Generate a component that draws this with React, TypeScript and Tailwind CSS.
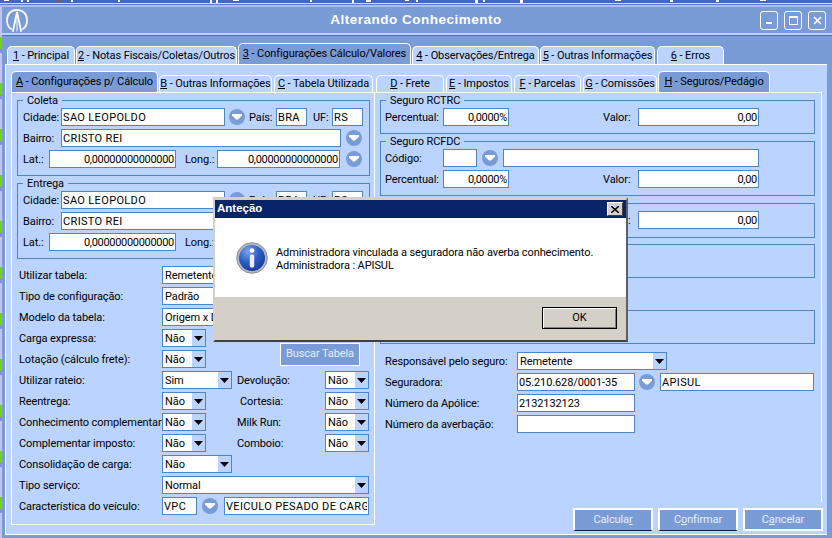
import React from "react";

const Field = ({ w, value = "", right, className = "" }: { w: number; value?: string; right?: boolean; className?: string }) => (
  <input
    readOnly
    value={value}
    style={{ width: w }}
    className={`h-[18px] shrink-0 border border-[#4a86c8] bg-white px-[1px] text-[11px] text-black outline-none ${right ? "text-right tracking-[-0.3px]" : ""} ${className}`}
  />
);

const Pick = ({ w, value, className = "" }: { w: number; value: string; className?: string }) => (
  <div style={{ width: w }} className={`flex h-[18px] shrink-0 items-stretch border border-[#4a86c8] bg-white ${className}`}>
    <span className="flex-1 overflow-hidden whitespace-nowrap pl-[2px] leading-[18px]">{value}</span>
    <span className="flex w-[13px] items-center justify-center bg-[#bad4ff]">
      <svg width="9" height="5" viewBox="0 0 9 5"><path d="M0 0h9L4.500 5z" fill="#000" /></svg>
    </span>
  </div>
);

const Lookup = ({ className = "" }: { className?: string }) => (
  <span className={`flex h-[16px] w-[16px] shrink-0 items-center justify-center rounded-full bg-[#7a9cd6] ${className}`}>
    <svg width="10" height="6" viewBox="0 0 10 6"><path d="M0 0h10v1.500L6 5.500H4L0 1.500z" fill="#fff" /></svg>
  </span>
);

const Label = ({ w, children, className = "" }: { w: number; children: React.ReactNode; className?: string }) => (
  <span style={{ width: w }} className={`shrink-0 whitespace-nowrap leading-[20px] ${className}`}>{children}</span>
);

const Row = ({ children, className = "" }: { children: React.ReactNode; className?: string }) => (
  <div className={`flex h-[18px] items-start ${className}`}>{children}</div>
);

const Group = ({ title, h, children }: { title: string; h: number; children: React.ReactNode }) => (
  <fieldset style={{ height: h }} className="border border-[#4a86c8] px-0">
    <legend className="ml-[5px] h-[14px] px-[4px] text-[11px] leading-[15px]">{title}</legend>
    <div className="flex flex-col gap-[3px] pt-[1px]">{children}</div>
  </fieldset>
);

const Tab = ({ w, mark, text, active, big, className = "" }: { w: number; mark: string; text: string; active?: boolean; big?: boolean; className?: string }) => (
  <div
    style={{ width: w }}
    className={`flex shrink-0 items-center justify-center whitespace-nowrap rounded-t-[5px] border-x border-t border-white pt-[1px] text-[11px] ${
      active ? "bg-[#7a9cd6]" : "bg-[#bad4ff]"
    } ${big ? (active ? "h-[21px]" : "h-[18px]") : active ? "h-[21px]" : "h-[17px]"} ${className}`}
  >
    <span className="underline">{mark}</span>
    <span>&nbsp;- {text}</span>
  </div>
);

const ActionButton = ({ before, mark, after, edge }: { before: string; mark: string; after: string; edge?: boolean }) => (
  <button className={`h-[23px] w-[80px] border-2 border-white bg-[#7a9cd6] text-[11px] leading-[18px] text-[#e6eeff] ${edge ? "border-b border-b-[#10204a]" : ""}`}>
    {before}
    <span className="underline">{mark}</span>
    {after}
  </button>
);

const Logo = () => (
  <svg width="22" height="23" viewBox="0 0 22 23" fill="none" stroke="#fff" strokeLinecap="round" className="ml-[4px] shrink-0">
    <path d="M5 20C2 18 1 14 1 11 1 5 5 1 11 1s10 4 10 10c0 3-1 7-4 9" strokeWidth="1.800" opacity="0.9" />
    <path d="M7 22 11 3l4 19" strokeWidth="1.800" />
    <path d="M11 7v15" strokeWidth="1.200" opacity="0.8" />
  </svg>
);

const InfoIcon = () => (
  <svg width="32" height="32" viewBox="0 0 32 32" className="shrink-0">
    <defs>
      <radialGradient id="infoFill" cx="0.35" cy="0.25" r="0.9">
        <stop offset="0" stopColor="#7ea6ee" />
        <stop offset="0.45" stopColor="#2f5fc8" />
        <stop offset="1" stopColor="#12308c" />
      </radialGradient>
    </defs>
    <circle cx="16" cy="16" r="15.300" fill="#b4b8c0" stroke="#8a8e98" />
    <circle cx="16" cy="16" r="13" fill="url(#infoFill)" />
    <circle cx="16" cy="8.500" r="2.300" fill="#fff" />
    <rect x="13.800" y="12.500" width="4.400" height="13" rx="1.500" fill="#e8edf6" />
  </svg>
);

const Place = ({ title }: { title: string }) => (
  <Group title={title} h={83}>
    <Row className="pl-[5px]">
      <Label w={38}>Cidade:</Label>
      <Field w={164} value="SAO LEOPOLDO" className="tracking-[0.35px]" />
      <Lookup className="ml-[4px] mt-[1px]" />
      <Label w={27} className="ml-[4px]">País:</Label>
      <Field w={31} value="BRA" className="tracking-[0.35px]" />
      <Label w={19} className="ml-[6px]">UF:</Label>
      <Field w={31} value="RS" className="tracking-[0.35px]" />
    </Row>
    <Row className="pl-[5px]">
      <Label w={38}>Bairro:</Label>
      <Field w={280} value="CRISTO REI" className="tracking-[0.35px]" />
      <Lookup className="ml-[5px] mt-[1px]" />
    </Row>
    <Row className="pl-[5px]">
      <Label w={26}>Lat.:</Label>
      <Field w={127} right value="0,00000000000000" />
      <Label w={32} className="ml-[9px]">Long.:</Label>
      <Field w={123} right value="0,00000000000000" />
      <Lookup className="ml-[6px] mt-[1px]" />
    </Row>
  </Group>
);

export default function App() {
  return (
    <div className="relative h-[538px] w-[832px] overflow-hidden bg-[#7a9cd6] text-[11px] tracking-[-0.1px] text-black [font-family:Roboto,'Liberation_Sans',sans-serif]">
      <div className="h-[3px] bg-[#3f68c8]">
        <svg width="832" height="3" fill="#fff">
          <path d="M4 0h5v1H4zM21 0h2v2h-2zM27 0h2v2h-2zM71 0h2v2h-2zM118 0h2v2h-2zM210 0h2v3h-2zM216 0h2v3h-2zM233 0h6v1h-6zM310 0h2v2h-2zM352 0h2v3h-2zM366 0h5v2h-5zM405 0h4v1h-4zM416 0h2v2h-2zM475 0h3v3h-3zM483 0h2v2h-2zM520 0h3v3h-3zM615 0h6v1h-6zM670 0h3v2h-3zM716 0h3v2h-3zM760 0h6v1h-6z" />
          <circle cx="59" cy="0" r="3" fill="#666" />
        </svg>
      </div>
      <div className="h-[1px] bg-[#c8dcfc]" />
      <div className="h-[1px] bg-[#5c7fd0]" />
      <div className="h-[2px] bg-[#a4bfea]" />

      <div className="flex">
        <div className="h-[531px] w-[2px] shrink-0 bg-[repeating-linear-gradient(180deg,#c4c4f0_0_30px,#70d808_30px_42px,#8a8ae6_42px_46px)]" />
        <div className="min-w-0 flex-1">
          <div className="flex h-[26px] items-center">
            <Logo />
            <h1 className="flex-1 pl-[44px] text-center text-[13.500px] font-bold leading-[26px] tracking-[0.5px] text-white [font-family:'Liberation_Sans',sans-serif]">Alterando Conhecimento</h1>
            <div className="mr-[6px] flex gap-[6px]">
              <span className="flex h-[19px] w-[18px] items-center justify-center rounded-[3px] border border-white pt-[6px]">
                <span className="h-[2px] w-[6px] bg-white" />
              </span>
              <span className="flex h-[19px] w-[18px] items-center justify-center rounded-[3px] border border-white">
                <span className="h-[9px] w-[9px] border border-t-2 border-white" />
              </span>
              <span className="flex h-[19px] w-[18px] items-center justify-center rounded-[3px] border border-white">
                <svg width="9" height="9" viewBox="0 0 9 9" stroke="#fff" strokeWidth="1.600"><path d="M1 1l7 7M8 1L1 8" /></svg>
              </span>
            </div>
          </div>
          <div className="h-[2px] bg-[#b9d3fc]" />
          <div className="h-[1px] bg-[#4a6cc4]" />

          <div className="ml-[5px] flex h-[28px] items-end gap-[1px]">
            <Tab big w={68} mark="1" text="Principal" />
            <Tab big w={161} mark="2" text="Notas Fiscais/Coletas/Outros" />
            <Tab big active w={173} mark="3" text="Configurações Cálculo/Valores" />
            <Tab big w={127} mark="4" text="Observações/Entrega" />
            <Tab big w={115} mark="5" text="Outras Informações" />
            <Tab big w={67} mark="6" text="Erros" className="ml-[1px]" />
          </div>

          <div className="ml-[3px] flex h-[471px] w-[822px] border-b border-l border-t border-white bg-[#bad4ff]">
            <div className="ml-[5px] w-[364px] shrink-0 pt-[6px]">
              <div className="flex h-[21px] items-end gap-[1px]">
                <Tab active w={147} mark="A" text="Configurações p/ Cálculo" />
                <Tab w={113} mark="B" text="Outras Informações" />
                <Tab w={99} mark="C" text="Tabela Utilizada" className="ml-[1px]" />
              </div>
              <div className="h-[433px] border-b border-l border-r border-t border-white">
                <div className="ml-[5px] w-[353px]">
                  <Place title="Coleta" />
                  <Place title="Entrega" />
                </div>

                <div className="mt-[7px] flex flex-col gap-[3px] pl-[7px]">
                  <Row><Label w={143}>Utilizar tabela:</Label><Pick w={207} value="Remetente" /></Row>
                  <Row><Label w={143}>Tipo de configuração:</Label><Pick w={207} value="Padrão" /></Row>
                  <Row><Label w={143}>Modelo da tabela:</Label><Pick w={207} value="Origem x Destino" /></Row>
                  <Row><Label w={143}>Carga expressa:</Label><Pick w={44} value="Não" /></Row>
                  <Row>
                    <Label w={143}>Lotação (cálculo frete):</Label>
                    <Pick w={44} value="Não" />
                    <button className="-mt-[7px] ml-[74px] h-[23px] w-[80px] shrink-0 border border-white bg-[#7a9cd6] text-[11px] text-[#e6eeff]">Buscar Tabela</button>
                  </Row>
                  <Row>
                    <Label w={143}>Utilizar rateio:</Label>
                    <Pick w={70} value="Sim" />
                    <Label w={88} className="ml-[5px]">Devolução:</Label>
                    <Pick w={44} value="Não" />
                  </Row>
                  <Row>
                    <Label w={143}>Reentrega:</Label>
                    <Pick w={44} value="Não" />
                    <Label w={85} className="ml-[34px]">Cortesia:</Label>
                    <Pick w={44} value="Não" />
                  </Row>
                  <Row>
                    <Label w={143}>Conhecimento complementar:</Label>
                    <Pick w={44} value="Não" />
                    <Label w={88} className="ml-[31px]">Milk Run:</Label>
                    <Pick w={44} value="Não" />
                  </Row>
                  <Row>
                    <Label w={143}>Complementar imposto:</Label>
                    <Pick w={44} value="Não" />
                    <Label w={88} className="ml-[31px]">Comboio:</Label>
                    <Pick w={44} value="Não" />
                  </Row>
                  <Row><Label w={143}>Consolidação de carga:</Label><Pick w={70} value="Não" /></Row>
                  <Row><Label w={143}>Tipo serviço:</Label><Pick w={207} value="Normal" /></Row>
                  <Row>
                    <Label w={143}>Característica do veículo:</Label>
                    <Field w={35} value="VPC" className="tracking-[0.35px]" />
                    <Lookup className="ml-[5px] mt-[1px]" />
                    <Field w={145} value="VEICULO PESADO DE CARGA" className="ml-[6px] tracking-[0.35px]" />
                  </Row>
                </div>
              </div>
            </div>

            <div className="min-w-0 flex-1 pt-[6px]">
              <div className="flex h-[21px] items-end gap-[1px] pl-[1px]">
                <Tab w={68} mark="D" text="Frete" />
                <Tab w={66} mark="E" text="Impostos" className="ml-[1px]" />
                <Tab w={67} mark="F" text="Parcelas" className="ml-[1px]" />
                <Tab w={74} mark="G" text="Comissões" className="ml-[1px]" />
                <Tab active w={112} mark="H" text="Seguros/Pedágio" />
              </div>
              <div className="h-[410px] w-[447px] border-r border-t border-white">
                <div className="ml-[5px] w-[435px]">
                  <Group title="Seguro RCTRC" h={41}>
                    <Row className="pl-[4px]">
                      <Label w={58}>Percentual:</Label>
                      <Field w={66} right value="0,0000%" />
                      <Label w={35} className="ml-[94px]">Valor:</Label>
                      <Field w={121} right value="0,00" />
                    </Row>
                  </Group>
                  <Group title="Seguro RCFDC" h={62}>
                    <Row className="pl-[4px]">
                      <Label w={58}>Código:</Label>
                      <Field w={34} />
                      <Lookup className="ml-[5px] mt-[1px]" />
                      <Field w={256} className="ml-[5px]" />
                    </Row>
                    <Row className="pl-[4px]">
                      <Label w={58}>Percentual:</Label>
                      <Field w={66} right value="0,0000%" />
                      <Label w={35} className="ml-[94px]">Valor:</Label>
                      <Field w={121} right value="0,00" />
                    </Row>
                  </Group>
                  <div className="mt-[7px] h-[35px] border border-[#4a86c8] pt-[7px]">
                    <Row className="pl-[222px]">
                      <Label w={35}>Valor:</Label>
                      <Field w={121} right value="0,00" />
                    </Row>
                  </div>
                  <div className="mt-[6px] h-[34px] border border-[#4a86c8]" />
                  <div className="mt-[32px] h-[34px] border border-[#4a86c8]" />
                </div>
                <div className="ml-[10px] mt-[8px] flex flex-col gap-[3px]">
                  <Row><Label w={132}>Responsável pelo seguro:</Label><Pick w={150} value="Remetente" /></Row>
                  <Row>
                    <Label w={132}>Seguradora:</Label>
                    <Field w={118} value="05.210.628/0001-35" />
                    <Lookup className="ml-[4px] mt-[1px]" />
                    <Field w={154} value="APISUL" className="ml-[5px] tracking-[0.35px]" />
                  </Row>
                  <Row><Label w={132}>Número da Apólice:</Label><Field w={118} value="2132132123" /></Row>
                  <Row><Label w={132}>Número da averbação:</Label><Field w={118} /></Row>
                </div>
              </div>
              <div className="mt-[6px] flex justify-end gap-[5px] pr-[4px]">
                <ActionButton edge before="Calcula" mark="r" after="" />
                <ActionButton edge before="C" mark="o" after="nfirmar" />
                <ActionButton before="C" mark="a" after="ncelar" />
              </div>
            </div>
          </div>
        </div>
      </div>

      <div className="absolute left-[213px] top-[197px] flex h-[145px] w-[415px] flex-col border-b-2 border-l-2 border-r-2 border-t-[3px] border-b-[#404040] border-l-[#d4d0c8] border-r-[#606060] border-t-[#d4d0c8]">
        <div className="flex h-[18px] items-center justify-between bg-[#0a246a] pl-[2px] pr-[3px]">
          <span className="text-[11.500px] font-bold tracking-normal text-white [font-family:'Liberation_Sans',sans-serif]">Anteção</span>
          <span className="flex h-[14px] w-[16px] items-center justify-center border border-b-[#404040] border-l-white border-r-[#404040] border-t-white bg-[#d4d0c8]">
            <svg width="8" height="7" viewBox="0 0 8 7" stroke="#000" strokeWidth="1.500"><path d="M0 0l8 7M8 0L0 7" /></svg>
          </span>
        </div>
        <div className="flex h-[79px] gap-[8px] bg-white pl-[21px] pt-[24px]">
          <InfoIcon />
          <p className="pt-[4px] text-[11px] leading-[13px]">
            Administradora vinculada a seguradora não averba conhecimento.
            <br />
            Administradora : APISUL
          </p>
        </div>
        <div className="flex flex-1 items-start justify-end bg-[#d4d0c8] pr-[9px] pt-[10px]">
          <button className="h-[22px] w-[75px] border border-black bg-[#d4d0c8] text-[11px] shadow-[inset_1px_1px_0_#fff,inset_-1px_-1px_0_#808080]">OK</button>
        </div>
      </div>
    </div>
  );
}
